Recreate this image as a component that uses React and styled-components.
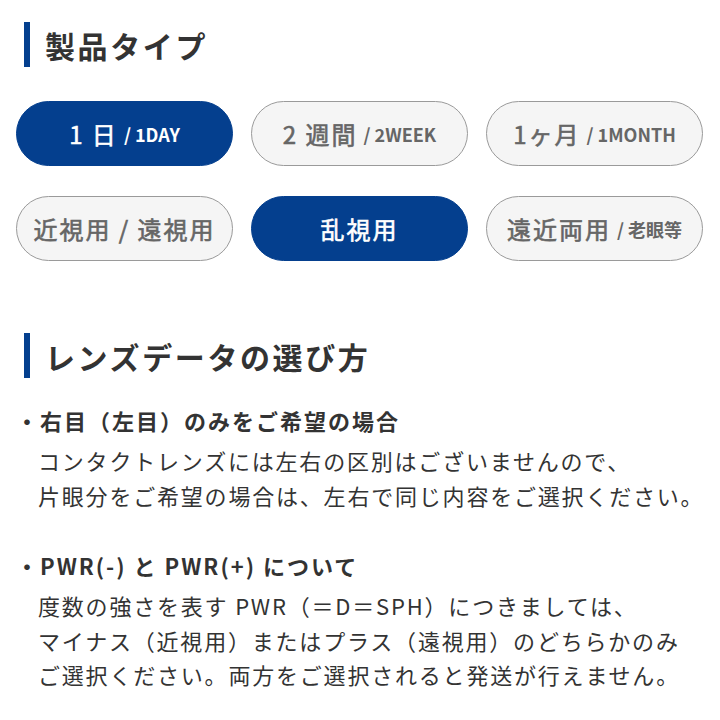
import React from 'react';
import styled, { createGlobalStyle } from 'styled-components';

const GlobalStyle = createGlobalStyle`
  html, body {
    margin: 0;
    padding: 0;
    background: #fff;
  }
  body {
    font-family: "Noto Sans CJK JP", "Noto Sans", sans-serif;
    color: #333;
  }
`;

const Page = styled.div`
  width: 720px;
  padding: 22px 16px 0;
  box-sizing: border-box;
`;

const SectionTitle = styled.h2`
  display: flex;
  align-items: center;
  gap: 15px;
  margin: ${(p) => (p.$first ? '0' : '72px')} 0 0 8px;
  height: 45px;
  font-size: 30px;
  font-weight: 700;
  letter-spacing: 2.6px;
  line-height: 1;
  color: #333;

  &::before {
    content: '';
    width: 6px;
    height: 45px;
    background: #043f8e;
  }
`;

const TypeGrid = styled.div`
  display: grid;
  grid-template-columns: repeat(3, 217px);
  column-gap: 18px;
  row-gap: 30px;
  margin-top: 34px;
`;

// medium weight isn't installed, so regular gets a thin stroke
const TypeButton = styled.button`
  display: flex;
  align-items: center;
  justify-content: center;
  height: 65px;
  padding: 0 10px;
  border-radius: 33px;
  border: 1px solid ${(p) => (p.$active ? '#043f8e' : '#9a9a9a')};
  background: ${(p) => (p.$active ? '#043f8e' : '#f5f5f5')};
  color: ${(p) => (p.$active ? '#fff' : '#666')};
  font-family: inherit;
  font-size: 24px;
  font-weight: 400;
  -webkit-text-stroke: 0.6px currentColor;
  letter-spacing: 2px;
  white-space: nowrap;
  cursor: pointer;
`;

const Sub = styled.span`
  margin-left: 6px;
  font-size: 18px;
  font-weight: 700;
  -webkit-text-stroke: 0;
  letter-spacing: 0;
`;

const Guide = styled.div`
  margin-top: 25px;
`;

const Point = styled.div`
  & + & {
    margin-top: 36px;
  }
`;

const PointTitle = styled.h3`
  margin: 0;
  font-size: 22px;
  font-weight: 700;
  line-height: 34px;
  letter-spacing: 2px;
  white-space: nowrap;
  color: #333;
`;

const PointBody = styled.p`
  margin: 6px 0 0;
  padding-left: 22px;
  font-size: 22px;
  font-weight: 400;
  line-height: 34.5px;
  letter-spacing: 1.8px;
  white-space: nowrap;
  color: #333;
`;

const types = [
  { label: '1 日', sub: '/ 1DAY', active: true },
  { label: '2 週間', sub: '/ 2WEEK' },
  { label: '1ヶ月', sub: '/ 1MONTH' },
  { label: '近視用 / 遠視用' },
  { label: '乱視用', active: true },
  { label: '遠近両用', sub: '/ 老眼等' },
];

export default function App() {
  return (
    <Page>
      <GlobalStyle />
      <SectionTitle $first>製品タイプ</SectionTitle>
      <TypeGrid>
        {types.map((t) => (
          <TypeButton key={t.label} $active={t.active}>
            {t.label}
            {t.sub && <Sub>{t.sub}</Sub>}
          </TypeButton>
        ))}
      </TypeGrid>

      <SectionTitle>レンズデータの選び方</SectionTitle>
      <Guide>
        <Point>
          <PointTitle>・右目（左目）のみをご希望の場合</PointTitle>
          <PointBody>
            コンタクトレンズには左右の区別はございませんので、
            <br />
            片眼分をご希望の場合は、左右で同じ内容をご選択ください。
          </PointBody>
        </Point>
        <Point>
          <PointTitle>・PWR(-) と PWR(+) について</PointTitle>
          <PointBody>
            度数の強さを表す PWR（＝D＝SPH）につきましては、
            <br />
            マイナス（近視用）またはプラス（遠視用）のどちらかのみ
            <br />
            ご選択ください。両方をご選択されると発送が行えません。
          </PointBody>
        </Point>
      </Guide>
    </Page>
  );
}
